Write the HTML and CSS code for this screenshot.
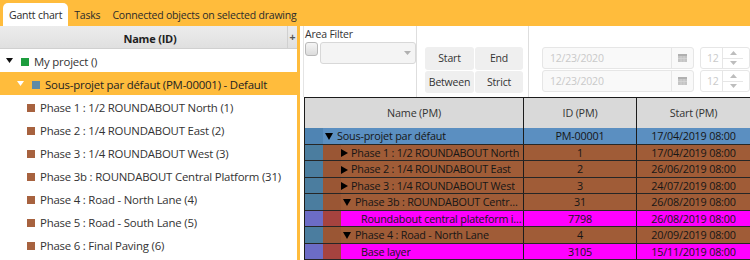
FILE: index.html
```html
<!doctype html>
<html lang="en">
<head>
    <meta charset="UTF-8">
    <title>Gantt chart</title>
    <link rel="stylesheet" href="styles.css">
</head>
<body>
    <div class="app">
        <div class="tabs">
            <div class="tab active">Gantt chart</div>
            <div class="tab">Tasks</div>
            <div class="tab">Connected objects on selected drawing</div>
        </div>
        <div class="main">
            <div class="tree">
                <div class="tree-head">
                    <div class="tree-title">Name (ID)</div>
                    <div class="tree-add">+</div>
                </div>
                <div class="node lvl0">
                    <span class="tw"><svg width="7" height="5" viewBox="0 0 7 5"><polygon points="0,0 7,0 3.5,5" fill="#111"/></svg></span>
                    <span class="sq green"></span>My project ()
                </div>
                <div class="node lvl1 selected">
                    <span class="tw"><svg width="7" height="5" viewBox="0 0 7 5"><polygon points="0,0 7,0 3.5,5" fill="#fff"/></svg></span>
                    <span class="sq steel"></span>Sous-projet par défaut (PM-00001) - Default
                </div>
                <div class="node lvl2"><span class="sq brown"></span>Phase 1 : 1/2 ROUNDABOUT North (1)</div>
                <div class="node lvl2"><span class="sq brown"></span>Phase 2 : 1/4 ROUNDABOUT East (2)</div>
                <div class="node lvl2"><span class="sq brown"></span>Phase 3 : 1/4 ROUNDABOUT West (3)</div>
                <div class="node lvl2"><span class="sq brown"></span>Phase 3b : ROUNDABOUT Central Platform (31)</div>
                <div class="node lvl2"><span class="sq brown"></span>Phase 4 : Road - North Lane (4)</div>
                <div class="node lvl2"><span class="sq brown"></span>Phase 5 : Road - South Lane (5)</div>
                <div class="node lvl2"><span class="sq brown"></span>Phase 6 : Final Paving (6)</div>
            </div>

            <div class="gantt">
                <div class="toolbar">
                    <div class="area">
                        <div class="area-label">Area Filter</div>
                        <div class="area-row">
                            <div class="check"></div>
                            <div class="combo"><svg width="7" height="4" viewBox="0 0 7 4"><polygon points="0,0 7,0 3.5,4" fill="#b0b0b0"/></svg></div>
                        </div>
                    </div>
                    <div class="sep"></div>
                    <div class="modes">
                        <div class="mode">Start</div>
                        <div class="mode">End</div>
                        <div class="mode">Between</div>
                        <div class="mode">Strict</div>
                    </div>
                    <div class="sep"></div>
                    <div class="dates">
                        <div class="date-row">
                            <div class="date">
                                <div class="date-text">12/23/2020</div>
                                <div class="date-btn"><svg width="9" height="8" viewBox="0 0 9 8"><rect width="9" height="8" fill="#c4c4c4"/><rect y="0" width="9" height="2" fill="#b0b0b0"/><path d="M3 2V8M6 2V8M0 4.5H9" stroke="#d8d8d8" stroke-width="0.7"/></svg></div>
                            </div>
                            <div class="spin">
                                <div class="spin-text">12</div>
                                <div class="spin-arrows">
                                    <div><svg width="7" height="4" viewBox="0 0 7 4"><polygon points="0,4 7,4 3.5,0" fill="#bdbdbd"/></svg></div>
                                    <div><svg width="7" height="4" viewBox="0 0 7 4"><polygon points="0,0 7,0 3.5,4" fill="#bdbdbd"/></svg></div>
                                </div>
                            </div>
                        </div>
                        <div class="date-row">
                            <div class="date">
                                <div class="date-text">12/23/2020</div>
                                <div class="date-btn"><svg width="9" height="8" viewBox="0 0 9 8"><rect width="9" height="8" fill="#c4c4c4"/><rect y="0" width="9" height="2" fill="#b0b0b0"/><path d="M3 2V8M6 2V8M0 4.5H9" stroke="#d8d8d8" stroke-width="0.7"/></svg></div>
                            </div>
                            <div class="spin">
                                <div class="spin-text">12</div>
                                <div class="spin-arrows">
                                    <div><svg width="7" height="4" viewBox="0 0 7 4"><polygon points="0,4 7,4 3.5,0" fill="#bdbdbd"/></svg></div>
                                    <div><svg width="7" height="4" viewBox="0 0 7 4"><polygon points="0,0 7,0 3.5,4" fill="#bdbdbd"/></svg></div>
                                </div>
                            </div>
                        </div>
                    </div>
                </div>

                <div class="grid">
                    <div class="grid-row grid-head">
                        <div>Name (PM)</div>
                        <div>ID (PM)</div>
                        <div>Start (PM)</div>
                    </div>
                    <div class="grid-row p-blue">
                        <div class="c nm"><span class="ia"></span><span class="lab open1"><svg class="down" width="8" height="7" viewBox="0 0 8 7"><polygon points="0,0 8,0 4,7" fill="#000"/></svg><span class="t">Sous-projet par défaut</span></span></div>
                        <div class="c">PM-00001</div>
                        <div class="c">17/04/2019 08:00</div>
                    </div>
                    <div class="grid-row p-brown">
                        <div class="c nm"><span class="ia"></span><span class="ib"></span><span class="lab shut"><svg class="right" width="7" height="8" viewBox="0 0 7 8"><polygon points="0,0 7,4 0,8" fill="#000"/></svg><span class="t">Phase 1 : 1/2 ROUNDABOUT North</span></span></div>
                        <div class="c">1</div>
                        <div class="c">17/04/2019 08:00</div>
                    </div>
                    <div class="grid-row p-brown">
                        <div class="c nm"><span class="ia"></span><span class="ib"></span><span class="lab shut"><svg class="right" width="7" height="8" viewBox="0 0 7 8"><polygon points="0,0 7,4 0,8" fill="#000"/></svg><span class="t">Phase 2 : 1/4 ROUNDABOUT East</span></span></div>
                        <div class="c">2</div>
                        <div class="c">26/06/2019 08:00</div>
                    </div>
                    <div class="grid-row p-brown">
                        <div class="c nm"><span class="ia"></span><span class="ib"></span><span class="lab shut"><svg class="right" width="7" height="8" viewBox="0 0 7 8"><polygon points="0,0 7,4 0,8" fill="#000"/></svg><span class="t">Phase 3 : 1/4 ROUNDABOUT West</span></span></div>
                        <div class="c">3</div>
                        <div class="c">24/07/2019 08:00</div>
                    </div>
                    <div class="grid-row p-brown">
                        <div class="c nm"><span class="ia"></span><span class="ib"></span><span class="lab open2"><svg class="down" width="8" height="7" viewBox="0 0 8 7"><polygon points="0,0 8,0 4,7" fill="#000"/></svg><span class="t">Phase 3b : ROUNDABOUT Central Platform</span></span></div>
                        <div class="c">31</div>
                        <div class="c">26/08/2019 08:00</div>
                    </div>
                    <div class="grid-row p-mag">
                        <div class="c nm"><span class="ia"></span><span class="ib"></span><span class="lab leaf"><span class="t">Roundabout central plateform island</span></span></div>
                        <div class="c">7798</div>
                        <div class="c">26/08/2019 08:00</div>
                    </div>
                    <div class="grid-row p-brown">
                        <div class="c nm"><span class="ia"></span><span class="ib"></span><span class="lab open2"><svg class="down" width="8" height="7" viewBox="0 0 8 7"><polygon points="0,0 8,0 4,7" fill="#000"/></svg><span class="t">Phase 4 : Road - North Lane</span></span></div>
                        <div class="c">4</div>
                        <div class="c">20/09/2019 08:00</div>
                    </div>
                    <div class="grid-row p-mag">
                        <div class="c nm"><span class="ia"></span><span class="ib"></span><span class="lab leaf"><span class="t">Base layer</span></span></div>
                        <div class="c">3105</div>
                        <div class="c">15/11/2019 08:00</div>
                    </div>
                </div>
            </div>
        </div>
    </div>
</body>
</html>
```
FILE: styles.css
```css
* {
    margin: 0;
    padding: 0;
    box-sizing: border-box;
}

body {
    width: 750px;
    height: 260px;
    overflow: hidden;
    background-color: #ffbc3c;
    color: #333;
    font-family: 'Open Sans', sans-serif;
    font-size: 10.5px;
    letter-spacing: -0.2px;
}

.app {
    height: 260px;
    display: flex;
    flex-direction: column;
}

/* tabs */

.tabs {
    height: 26px;
    flex-shrink: 0;
    display: flex;
    align-items: flex-end;
    padding-left: 3px;
}

.tab {
    height: 23px;
    line-height: 25px;
    padding: 0 6px;
    color: #2b2b2b;
    white-space: nowrap;
}

.tab.active {
    background-color: #fff;
    border-radius: 5px 5px 0 0;
}

.main {
    flex: 1;
    min-height: 0;
    display: flex;
    gap: 3px;
}

/* tree */

.tree {
    width: 297px;
    flex-shrink: 0;
    background-color: #fff;
}

.tree-head {
    height: 23px;
    display: flex;
    background: linear-gradient(#ececec, #e0e0e0);
    border-bottom: 1px solid #d0d0d0;
}

.tree-title {
    flex: 1;
    padding-left: 13px;
    text-align: center;
    line-height: 25px;
    font-size: 11px;
    font-weight: 700;
    color: #1f1f1f;
}

.tree-add {
    width: 10px;
    border-left: 1px solid #d0d0d0;
    text-align: center;
    line-height: 22px;
    font-weight: 700;
    color: #555;
}

.node {
    height: 23px;
    padding-top: 2px;
    display: flex;
    align-items: center;
    white-space: nowrap;
    font-size: 11.4px;
    color: #333;
}

.node.selected {
    background-color: #ffbc3c;
    color: #222;
}

.lvl0 { padding-left: 6px; }
.lvl1 { padding-left: 17px; }
.lvl2 { padding-left: 27px; }

.tw {
    width: 15px;
    display: flex;
}

.tw svg {
    margin-bottom: 3px;
}

.sq {
    width: 8px;
    height: 8px;
    margin-right: 5px;
    flex-shrink: 0;
}

.green { background-color: #1d9d3e; }
.steel { background-color: #5f8aa6; }
.brown { background-color: #a7623f; }

/* gantt side */

.gantt {
    flex: 1;
    min-width: 0;
    overflow: hidden;
    background-color: #fff;
    padding-left: 4px;
    display: flex;
    flex-direction: column;
}

.toolbar {
    height: 71px;
    flex-shrink: 0;
    display: flex;
    box-shadow: -1px 0 0 #e4e4e4;
}

.area {
    width: 118px;
    padding: 2px 0 0 1px;
}

.area-label {
    line-height: 13px;
}

.area-row {
    margin-top: 1px;
    display: flex;
    gap: 2px;
}

.check {
    width: 13px;
    height: 14px;
    border: 1px solid #b8b8b8;
    border-radius: 3px;
    background: linear-gradient(#f5f5f5, #dcdcdc);
}

.combo {
    width: 96px;
    height: 22px;
    border: 1px solid #d8d8d8;
    border-radius: 3px;
    background-color: #f4f4f4;
    display: flex;
    align-items: center;
    justify-content: flex-end;
    padding-right: 4px;
}

.sep {
    width: 1px;
    flex-shrink: 0;
    background-color: #dedede;
}

.modes {
    align-self: flex-start;
    margin: 21px 5px 0 8px;
    display: grid;
    grid-template-columns: 49px 48px;
    grid-template-rows: 23px 22px;
    gap: 1px;
}

.mode {
    background-color: #efefef;
    border-radius: 3px;
    text-align: center;
    line-height: 23px;
    color: #333;
}

.dates {
    align-self: flex-start;
    margin: 21px 0 0 13px;
    display: flex;
    flex-direction: column;
    gap: 1px;
}

.date-row {
    height: 22px;
    display: flex;
    gap: 6px;
}

.date {
    width: 152px;
    display: flex;
    border: 1px solid #e6e6e6;
    border-radius: 3px;
    background-color: #f9f9f9;
}

.date-text {
    flex: 1;
    padding-left: 7px;
    line-height: 20px;
    color: #c9c9c9;
}

.date-btn {
    width: 22px;
    border-left: 1px solid #e6e6e6;
    display: flex;
    align-items: center;
    justify-content: center;
}

.spin {
    width: 50px;
    flex-shrink: 0;
    display: flex;
    border: 1px solid #e6e6e6;
    border-radius: 3px;
    background-color: #fff;
}

.spin-text {
    width: 21px;
    padding-left: 6px;
    overflow: hidden;
    white-space: nowrap;
    line-height: 20px;
    color: #cacaca;
}

.spin-arrows {
    width: 21px;
    border-left: 1px solid #e6e6e6;
    display: flex;
    flex-direction: column;
}

.spin-arrows div {
    flex: 1;
    display: flex;
    align-items: center;
    justify-content: center;
}

.spin-arrows div + div {
    border-top: 1px solid #e6e6e6;
}

/* table */

.grid {
    flex: 1;
    width: 460px;
    font-size: 10.8px;
    border-top: 1px solid #1c1c1c;
    border-left: 1px solid #1c1c1c;
}

.grid-row {
    display: grid;
    grid-template-columns: 219px 113px 114px;
}

.grid-head {
    height: 30px;
    line-height: 30px;
    background-color: #d9d9d9;
    text-align: center;
    color: #333;
}

.grid-head div {
    border-right: 1px solid #1c1c1c;
}

.grid-row:not(.grid-head) {
    height: 16.5px;
    border-bottom: 1px solid rgba(0, 0, 0, 0.85);
    color: #161616;
}

.c {
    padding-top: 1px;
    line-height: 14.5px;
    text-align: center;
    white-space: nowrap;
    overflow: hidden;
    border-right: 1px solid #1c1c1c;
}

.nm {
    padding-top: 0;
    display: flex;
    text-align: left;
}

.ia,
.ib {
    width: 18px;
    flex-shrink: 0;
}

.lab {
    flex: 1;
    min-width: 0;
    display: flex;
    align-items: center;
    padding-right: 1px;
}

.lab .t {
    display: block;
    min-width: 0;
    padding-top: 1px;
    overflow: hidden;
    text-overflow: ellipsis;
}

.lab svg {
    flex-shrink: 0;
    margin-top: 2px;
}

.lab .down { margin-right: 4px; }
.lab .right { margin-right: 3px; }

.open1 { padding-left: 2px; }
.open2 { padding-left: 2px; }
.shut { padding-left: 0; }
.leaf { padding-left: 20px; }

.p-blue .c { background-color: #5b8fc1; }
.p-blue .ia { background-color: #4f84b3; }

.p-brown .c { background-color: #a05c37; }
.p-brown .ia { background-color: #4b7d9f; }
.p-brown .ib { background-color: #9a5634; }

.p-mag .c { background-color: #ff00ff; }
.p-mag .ia { background-color: #6c6cc6; }
.p-mag .ib { background-color: #a6433f; }
```
